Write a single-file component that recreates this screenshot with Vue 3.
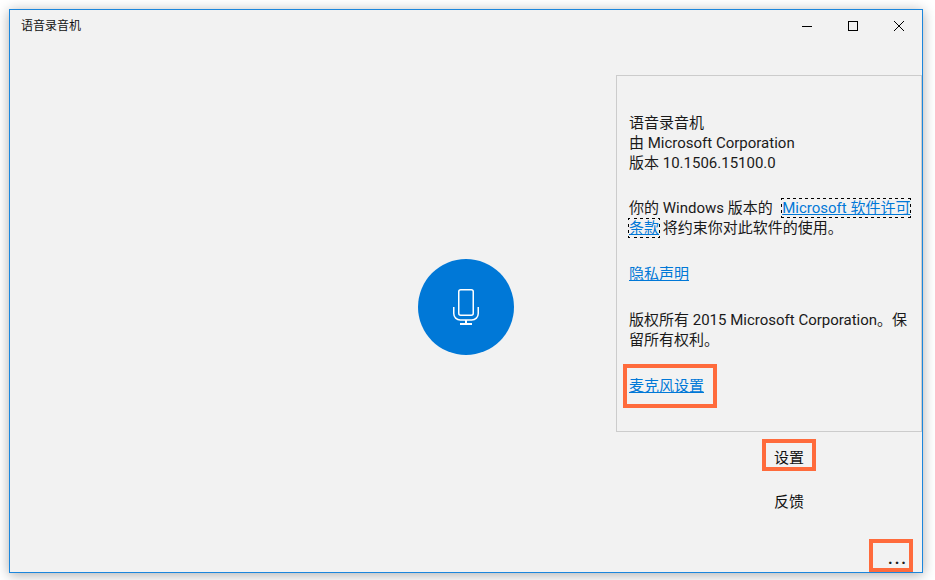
<script setup>
const title = '语音录音机'
</script>

<template>
  <div class="page">
    <div class="window">
      <header class="titlebar">
        <span class="title">{{ title }}</span>
        <div class="controls">
          <svg class="ctl" width="46" height="32" viewBox="0 0 46 32"><path d="M18 16.5h10" stroke="#000" fill="none"/></svg>
          <svg class="ctl" width="46" height="32" viewBox="0 0 46 32"><rect x="18.5" y="11.5" width="9" height="9" stroke="#000" fill="none"/></svg>
          <svg class="ctl" width="46" height="32" viewBox="0 0 46 32"><path d="M18 11l10 10M28 11L18 21" stroke="#000" fill="none"/></svg>
        </div>
      </header>
      <main class="body">
        <section class="stage">
          <button class="record" aria-label="录音">
            <svg width="30" height="38" viewBox="0 0 30 38" fill="none" stroke="#fff" stroke-width="1.5">
              <rect x="7.75" y="1.75" width="14.5" height="25.5" rx="2"/>
              <path d="M2.75 19v6.5a6.5 6.5 0 0 0 6.5 6.5h11.5a6.5 6.5 0 0 0 6.5-6.5V19"/>
              <path d="M15 32v4M9 36h12" stroke-width="2"/>
            </svg>
          </button>
        </section>
        <aside class="side">
          <div class="panel">
            <p class="first">语音录音机<br>由 Microsoft Corporation<br>版本 10.1506.15100.0</p>
            <p>你的 Windows 版本的 &nbsp;<a class="link focused">Microsoft 软件许可条款</a> 将约束你对此软件的使用。</p>
            <p><a class="link">隐私声明</a></p>
            <p>版权所有 2015 Microsoft Corporation。保留所有权利。</p>
            <p class="last"><a class="link marked mic">麦克风设置</a></p>
          </div>
          <div class="actions">
            <span class="action marked set">设置</span>
            <span class="action">反馈</span>
          </div>
          <div class="more"><span class="dots marked">...</span></div>
        </aside>
      </main>
    </div>
  </div>
</template>

<style>
html, body { margin: 0; background: #fff; }
</style>

<style scoped>
.page {
  width: 935px;
  height: 580px;
  padding: 9px 12px 7px 9px;
  box-sizing: border-box;
  overflow: hidden;
  font-family: Roboto, "Noto Sans CJK SC", sans-serif;
  font-size: 15px;
  line-height: 20px;
  color: #1a1a1a;
}
.window {
  height: 100%;
  box-sizing: border-box;
  display: flex;
  flex-direction: column;
  background: #f2f2f2;
  border: 1px solid #1b86dc;
  box-shadow: 0 2px 12px rgba(0, 0, 0, 0.32);
}
.titlebar {
  height: 32px;
  flex: none;
  display: flex;
  justify-content: space-between;
}
.title {
  font-size: 12px;
  line-height: 32px;
  padding-left: 11px;
  color: #111;
}
.controls { display: flex; }
.ctl { display: block; }
.body {
  flex: 1;
  display: flex;
  min-height: 0;
}
.stage {
  flex: 1;
  display: flex;
  align-items: center;
  justify-content: flex-end;
  padding-right: 102px;
}
.record {
  width: 96px;
  height: 96px;
  padding: 0;
  border: 0;
  border-radius: 50%;
  background: #0078d7;
  display: flex;
  align-items: center;
  justify-content: center;
}
.side {
  width: 306px;
  flex: none;
  display: flex;
  flex-direction: column;
  padding-top: 33px;
}
.panel {
  height: 357px;
  box-sizing: border-box;
  border: 1px solid #cccccc;
  padding: 37px 10px 0 12px;
}
.panel p { margin: 0 0 26px; }
.panel p.first { margin-bottom: 25px; }
.panel p.last { margin: 0; }
.link {
  color: #0078d7;
  text-decoration: underline;
}
.focused { outline: 1px dotted #000; margin-left: 2px; }
.marked { position: relative; }
.marked::after {
  content: "";
  position: absolute;
  border: 4px solid #ff6b3c;
  box-sizing: border-box;
}
.mic::after { left: -6px; right: -13px; top: -13px; bottom: -13px; }
.actions {
  display: flex;
  flex-direction: column;
  align-items: center;
  gap: 24px;
  margin-top: 16px;
  padding-left: 40px;
  color: #111;
}
.action { display: block; }
.set::after { left: -12px; right: -12px; top: -9px; bottom: -3px; }
.more {
  margin-top: auto;
  display: flex;
  justify-content: flex-end;
  padding-right: 14px;
}
.dots {
  display: block;
  font-size: 16px;
  font-weight: 700;
  letter-spacing: 2px;
  line-height: 20px;
  transform: translateY(-3px);
}
.dots::after { left: -19px; right: -5px; top: -10px; bottom: -3px; }
</style>
